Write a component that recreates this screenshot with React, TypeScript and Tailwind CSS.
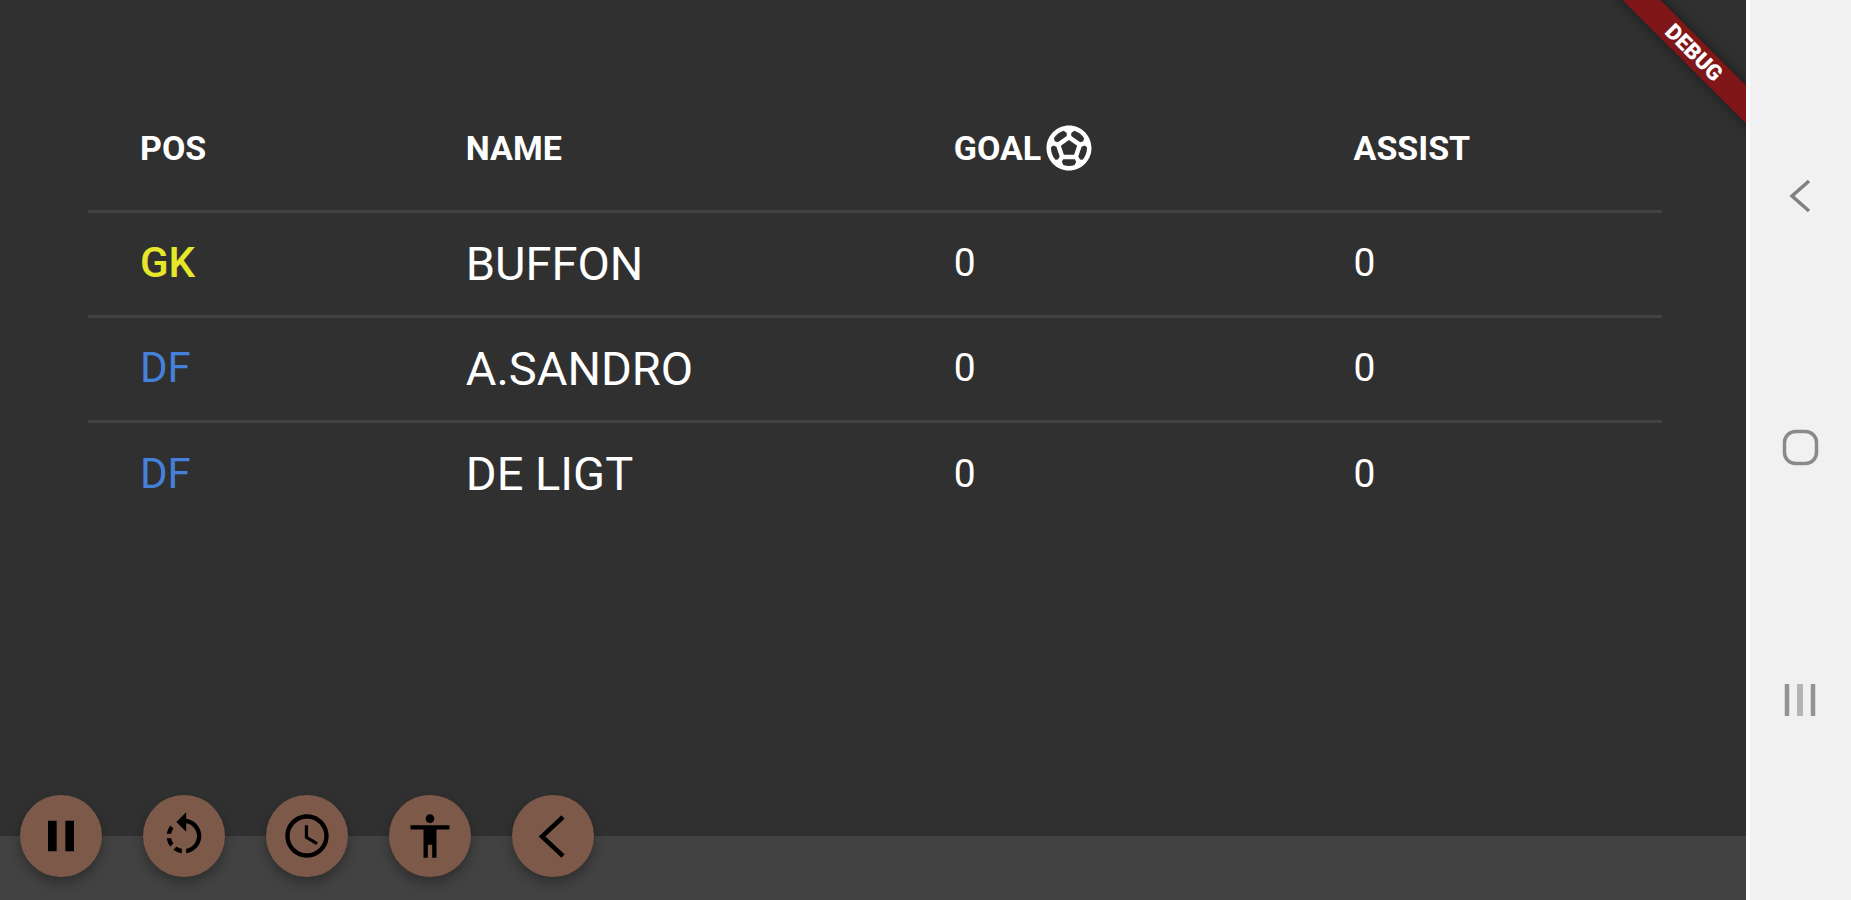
import React from "react";
import {
  MdAccessibility,
  MdAccessTime,
  MdPause,
  MdRotateLeft,
  MdSportsSoccer,
} from "react-icons/md";

interface Player {
  pos: string;
  name: string;
  goal: number;
  assist: number;
}

const players: Player[] = [
  { pos: "GK", name: "BUFFON", goal: 0, assist: 0 },
  { pos: "DF", name: "A.SANDRO", goal: 0, assist: 0 },
  { pos: "DF", name: "DE LIGT", goal: 0, assist: 0 },
];

const posColors: Record<string, string> = {
  GK: "text-[#e6e62a] font-medium",
  DF: "text-[#4480dc]",
};

const BackIcon: React.FC<{ size: number }> = ({ size }) => (
  <svg width={size} height={size} viewBox="0 0 52 52" fill="none">
    <path d="M36 7L15 26.5L36 46" stroke="currentColor" strokeWidth="4.5" />
  </svg>
);

const actions = [
  { label: "Pause", icon: MdPause },
  { label: "Reset", icon: MdRotateLeft },
  { label: "Time", icon: MdAccessTime },
  { label: "Players", icon: MdAccessibility },
  { label: "Back", icon: BackIcon },
];

const PlayerTable: React.FC = () => (
  <table className="w-full table-fixed border-collapse text-left text-white">
    <thead>
      <tr className="h-[124px] border-b-3 border-[#424242] text-[34px] leading-none">
        <th className="w-[20.7%] pl-[52px] font-bold">POS</th>
        <th className="w-[31%] pl-[52px] font-bold">NAME</th>
        <th className="w-[25.4%] pl-[52px] font-bold">
          <span className="flex items-center gap-px">
            GOAL
            <MdSportsSoccer size={54} className="shrink-0" />
          </span>
        </th>
        <th className="pl-[52px] font-bold">ASSIST</th>
      </tr>
    </thead>
    <tbody>
      {players.map((player) => (
        <tr
          key={player.name}
          className="h-[105px] border-b-3 border-[#424242] leading-none last:border-b-0"
        >
          <td className={`pb-px pl-[52px] text-[42px] ${posColors[player.pos]}`}>{player.pos}</td>
          <td className="pb-px pl-[52px] text-[47px]">{player.name}</td>
          <td className="pl-[52px] text-[39px]">{player.goal}</td>
          <td className="pl-[52px] text-[39px]">{player.assist}</td>
        </tr>
      ))}
    </tbody>
  </table>
);

const SystemBar: React.FC = () => (
  <nav className="flex w-[105px] shrink-0 flex-col border-l-4 border-white bg-[#f1f1f1] pt-[70px] pb-[74px]">
    <button aria-label="Back" className="flex flex-1 items-center justify-center">
      <svg width="38" height="38" viewBox="0 0 38 38" fill="none">
        <path d="M27 4L10 19L27 34" stroke="#808080" strokeWidth="3.5" />
      </svg>
    </button>
    <button aria-label="Home" className="flex flex-1 items-center justify-center">
      <svg width="38" height="38" viewBox="0 0 38 38" fill="none">
        <rect x="2.5" y="2.5" width="32" height="32" rx="11" stroke="#8a8a8a" strokeWidth="3.5" />
      </svg>
    </button>
    <button aria-label="Recents" className="flex flex-1 items-center justify-center">
      <svg width="38" height="38" viewBox="0 0 38 38" fill="none">
        <path d="M5 3V35" stroke="#929292" strokeWidth="4.5" />
        <path d="M18 3V35" stroke="#b4b4b4" strokeWidth="6" />
        <path d="M31 3V35" stroke="#929292" strokeWidth="4.5" />
      </svg>
    </button>
  </nav>
);

export default function App() {
  return (
    <div className="flex min-h-screen bg-[#303030] font-[Roboto,sans-serif]">
      <div className="relative flex min-w-0 flex-1 flex-col overflow-hidden">
        <main className="flex-1 pt-[87px] pr-[84px] pl-[88px]">
          <PlayerTable />
        </main>

        {/* Bottom bar, buttons sit on its top edge */}
        <footer className="h-16 bg-[#424242] pl-5">
          <div className="-mt-[41px] flex gap-[41px]">
            {actions.map(({ label, icon: Icon }) => (
              <button
                key={label}
                aria-label={label}
                className="flex size-[82px] items-center justify-center rounded-full bg-[#7d594a] text-black shadow-[0_6px_12px_rgba(0,0,0,0.3)]"
              >
                <Icon size={52} />
              </button>
            ))}
          </div>
        </footer>

        {/* Debug ribbon */}
        <div className="absolute top-[39px] right-[-58px] flex h-[27px] w-[220px] rotate-45 items-center justify-center bg-[#7f1719] text-[22px] leading-none font-black text-white shadow-[0_0_12px_rgba(0,0,0,0.5)]">
          DEBUG
        </div>
      </div>
      <SystemBar />
    </div>
  );
}
